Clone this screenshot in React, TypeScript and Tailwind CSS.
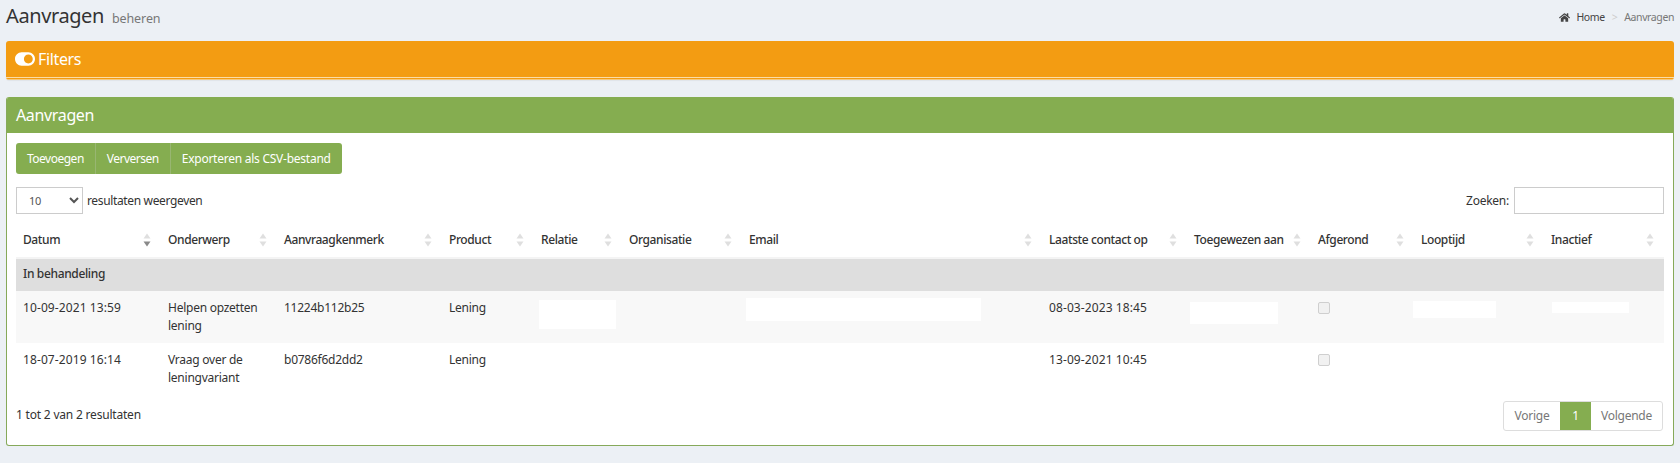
import React from "react";
import { FaHome, FaToggleOn } from "react-icons/fa";

const font = "font-['Noto_Sans','Open_Sans',sans-serif]";

function Sort({ active }: { active?: boolean }) {
  return (
    <svg width="8" height="14" viewBox="0 0 8 14" className="absolute right-[10px] top-[7px]">
      <path d="M4 0.5 L7.5 5.5 H0.5 Z" fill="#dfdfdf" />
      <path d="M4 13.5 L7.5 8.5 H0.5 Z" fill={active ? "#8a8a8a" : "#dfdfdf"} />
    </svg>
  );
}

const cols: { label: string; w: string }[] = [
  { label: "Datum", w: "w-[145px]" },
  { label: "Onderwerp", w: "w-[116px]" },
  { label: "Aanvraagkenmerk", w: "w-[165px]" },
  { label: "Product", w: "w-[92px]" },
  { label: "Relatie", w: "w-[88px]" },
  { label: "Organisatie", w: "w-[120px]" },
  { label: "Email", w: "w-[300px]" },
  { label: "Laatste contact op", w: "w-[145px]" },
  { label: "Toegewezen aan", w: "w-[124px]" },
  { label: "Afgerond", w: "w-[103px]" },
  { label: "Looptijd", w: "w-[130px]" },
  { label: "Inactief", w: "w-[120px]" },
];

const Cb = () => (
  <span className="mt-[3px] block h-[12px] w-[12px] rounded-[2px] border border-[#cfcfcf] bg-[#f1f1f1]" />
);

const td = "px-[7px] pt-[8px] pb-[8px] align-top leading-[18px]";
const num = "px-[7px] pt-[8px] pb-[8px] align-top leading-[18px] tracking-[0.1px]";

export default function App() {
  return (
    <div className={`${font} h-[463px] w-[1680px] overflow-hidden bg-[#ecf0f5] text-[12px] tracking-[-0.25px] text-[#333]`}>
      <header className="flex h-[41px] items-start justify-between px-[6px]">
        <h1 className="flex items-baseline pt-[1px] text-[20px] leading-[30px] tracking-[-0.4px] text-[#333]">
          Aanvragen
          <small className="ml-[8px] text-[12.5px] font-normal tracking-[-0.1px] text-[#777]">beheren</small>
        </h1>
        <nav className="flex items-center pt-[10px] text-[10.5px] leading-[14px] tracking-[-0.4px] text-[#444]">
          <FaHome className="mr-[6px] text-[11px]" />
          <span>Home</span>
          <span className="mx-[7px] text-[#ccc]">&gt;</span>
          <span className="text-[#777]">Aanvragen</span>
        </nav>
      </header>

      <section className="mx-[6px] h-[39px] w-[1668px] rounded-[3px] border-b border-[#f9c878] bg-[#f39c12] shadow-[0_1px_1px_rgba(0,0,0,0.05)]">
        <div className="flex h-[37px] items-center gap-[3px] border-b border-[#fbdca6] px-[9px] text-[16px] leading-[20px] tracking-[-0.35px] text-white">
          <FaToggleOn className="text-[20px]" />
          <span>Filters</span>
        </div>
      </section>

      <section className="mx-[6px] mt-[17px] h-[349px] w-[1668px] overflow-hidden rounded-[3px] border border-t-0 border-[#86a95a] bg-white">
        <div className="flex h-[36px] items-center bg-[#85ad50] px-[9px] text-[16px] leading-[20px] tracking-[-0.35px] text-white">Aanvragen</div>
        <div className="px-[9px] pt-[10px]">
          <div className="inline-flex h-[31px] overflow-hidden rounded-[3px] bg-[#85ad50] text-[12px] text-white">
            <button className="border-r border-[#98b672] px-[11px] tracking-[-0.5px]">Toevoegen</button>
            <button className="border-r border-[#98b672] px-[11px] tracking-[-0.5px]">Verversen</button>
            <button className="px-[11px]">Exporteren als CSV-bestand</button>
          </div>

          <div className="mt-[13px] flex h-[27px] items-center justify-between">
            <label className="flex items-center gap-[4px] tracking-[-0.35px]">
              <select className="h-[27px] w-[67px] border border-[#ccc] bg-white pl-[8px] text-[11px] text-[#555]">
                <option>10</option>
              </select>
              resultaten weergeven
            </label>
            <label className="flex items-center gap-[5px]">
              Zoeken:
              <input aria-label="Zoeken" className="h-[27px] w-[150px] border border-[#ccc] bg-white" />
            </label>
          </div>

          <table className="mt-[12px] w-[1648px] table-fixed border-collapse text-left">
            <thead>
              <tr className="h-[32px] border-b-2 border-[#f4f4f4]">
                {cols.map((c, i) => (
                  <th key={c.label} className={`${c.w} relative px-[7px] pb-[4px] font-medium tracking-[-0.4px]`}>
                    {c.label}
                    <Sort active={i === 0} />
                  </th>
                ))}
              </tr>
            </thead>
            <tbody>
              <tr className="h-[33px] bg-[#dedede]">
                <td colSpan={12} className="px-[7px] pb-[2px] font-medium tracking-[-0.35px]">In behandeling</td>
              </tr>
              <tr className="h-[52px] bg-[#f8f8f8]">
                <td className={num}>10-09-2021 13:59</td>
                <td className={td}>Helpen opzetten lening</td>
                <td className={td}>11224b112b25</td>
                <td className={td}>Lening</td>
                <td className={td}><span className="ml-[-2px] mt-[1px] block h-[29px] w-[77px] bg-white" /></td>
                <td className={td}></td>
                <td className={td}><span className="ml-[-3px] mt-[-1px] block h-[23px] w-[235px] bg-white" /></td>
                <td className={num}>08-03-2023 18:45</td>
                <td className={td}><span className="ml-[-4px] mt-[3px] block h-[22px] w-[88px] bg-white" /></td>
                <td className={td}><Cb /></td>
                <td className={td}><span className="ml-[-8px] mt-[2px] block h-[17px] w-[83px] bg-white" /></td>
                <td className={td}><span className="ml-[1px] mt-[3px] block h-[11px] w-[77px] bg-white" /></td>
              </tr>
              <tr className="h-[52px] bg-white">
                <td className={num}>18-07-2019 16:14</td>
                <td className={td}>Vraag over de leningvariant</td>
                <td className={td}>b0786f6d2dd2</td>
                <td className={td}>Lening</td>
                <td className={td}></td>
                <td className={td}></td>
                <td className={td}></td>
                <td className={num}>13-09-2021 10:45</td>
                <td className={td}></td>
                <td className={td}><Cb /></td>
                <td className={td}></td>
                <td className={td}></td>
              </tr>
            </tbody>
          </table>

          <div className="mt-[6px] flex items-start justify-between">
            <span className="pt-[5px] tracking-[-0.2px]">1 tot 2 van 2 resultaten</span>
            <div className="mr-[1px] flex h-[30px] overflow-hidden rounded-[3px] border border-[#ddd] text-[12px] leading-[28px] text-[#777]">
              <span className="w-[56px] text-center">Vorige</span>
              <span className="w-[31px] bg-[#85ad50] text-center text-white">1</span>
              <span className="w-[71px] text-center">Volgende</span>
            </div>
          </div>
        </div>
      </section>
    </div>
  );
}
